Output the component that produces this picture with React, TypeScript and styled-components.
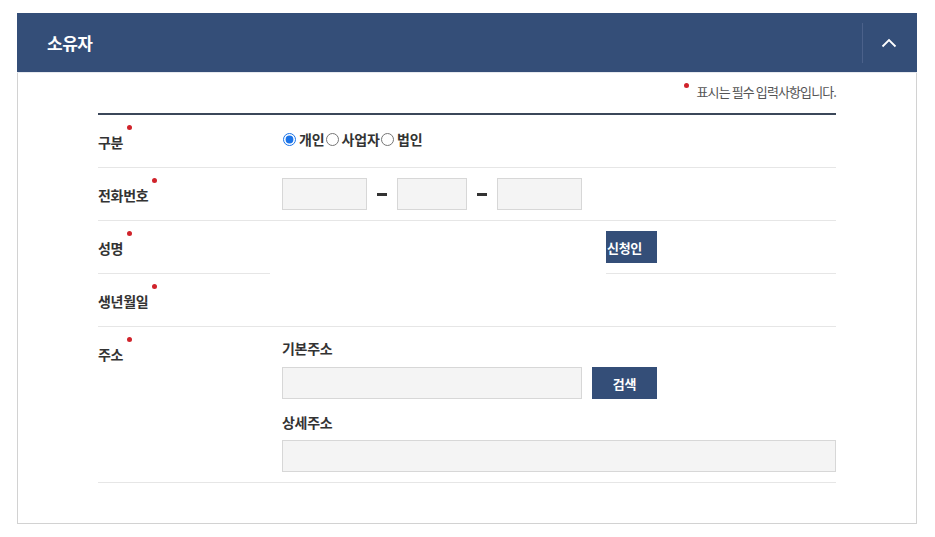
import React from "react"
import styled, { createGlobalStyle } from "styled-components"

const GlobalStyle = createGlobalStyle`
  body {
    margin: 0;
    background: #fff;
    font-family: "Noto Sans CJK KR", "Noto Sans", sans-serif;
    color: #222;
  }
`

const App: React.FC = () => (
  <Page>
    <GlobalStyle />
    <Panel>
      <Header>
        <Title>소유자</Title>
        <ToggleButton type="button" aria-label="접기">
          <svg width="16" height="10" viewBox="0 0 16 10" fill="none">
            <path d="M1.5 8.5L8 2l6.5 6.5" stroke="#fff" strokeWidth="1.8" />
          </svg>
        </ToggleButton>
      </Header>

      <Body>
        <Notice>
          <Dot />
          표시는 필수 입력사항입니다.
        </Notice>

        <Table>
          <Row>
            <Label>
              <Required>구분</Required>
            </Label>
            <Field>
              <RadioGroup>
                <RadioLabel>
                  <Radio type="radio" name="owner" defaultChecked />
                  개인
                </RadioLabel>
                <RadioLabel>
                  <Radio type="radio" name="owner" />
                  사업자
                </RadioLabel>
                <RadioLabel>
                  <Radio type="radio" name="owner" />
                  법인
                </RadioLabel>
              </RadioGroup>
            </Field>
          </Row>

          <Row>
            <Label>
              <Required>전화번호</Required>
            </Label>
            <Field>
              <PhoneGroup>
                <TextInput $width={85} />
                <Dash />
                <TextInput $width={70} />
                <Dash />
                <TextInput $width={85} />
              </PhoneGroup>
            </Field>
          </Row>

          <SplitRow>
            <SplitLabels>
              <SplitLabel $divided>
                <Required>성명</Required>
              </SplitLabel>
              <SplitLabel>
                <Required>생년월일</Required>
              </SplitLabel>
            </SplitLabels>
            <SplitAction>
              <ApplicantButton type="button">신청인</ApplicantButton>
            </SplitAction>
          </SplitRow>

          <Row>
            <Label>
              <Required>주소</Required>
            </Label>
            <AddressField>
              <SubLabel>기본주소</SubLabel>
              <AddressLine>
                <TextInput $width={300} />
                <SearchButton type="button">검색</SearchButton>
              </AddressLine>
              <SubLabel $spaced>상세주소</SubLabel>
              <TextInput />
            </AddressField>
          </Row>
        </Table>
      </Body>
    </Panel>
  </Page>
)

const Page = styled.div`
  padding: 13px 18px 14px 17px;
`

const Panel = styled.section`
  width: 900px;
  box-sizing: border-box;
  border: 1px solid #d2d2d2;
  border-top: 0;
  background: #fff;
`

const Header = styled.div`
  display: flex;
  align-items: center;
  justify-content: space-between;
  height: 59px;
  margin: 0 -1px;
  padding-left: 30px;
  padding-right: 3px;
  background: #344e78;
  border-bottom: 1px solid #e6e9ee;
`

const Title = styled.h2`
  margin: 0;
  font-size: 17px;
  font-weight: 700;
  letter-spacing: -0.5px;
  color: #fff;
`

const ToggleButton = styled.button`
  display: flex;
  align-items: center;
  justify-content: center;
  width: 52px;
  height: 40px;
  padding: 0;
  border: 0;
  border-left: 1px solid #4b618a;
  background: transparent;
  cursor: pointer;
`

const Body = styled.div`
  padding: 10px 80px 40px;
`

const Notice = styled.p`
  display: flex;
  justify-content: flex-end;
  align-items: flex-start;
  margin: 0 0 12px;
  font-size: 13px;
  line-height: 18px;
  letter-spacing: -0.9px;
  color: #555;
`

const Dot = styled.span`
  display: inline-block;
  width: 5px;
  height: 5px;
  margin: 0 8px 0 0;
  border-radius: 50%;
  background: #d0232b;
`

const Table = styled.div`
  border-top: 2px solid #3b4759;
`

const Row = styled.div`
  display: flex;
  min-height: 52px;
  border-bottom: 1px solid #e6e6e6;
`

const Label = styled.div`
  flex: 0 0 184px;
  padding-top: 17px;
  font-size: 14px;
  line-height: 20px;
  font-weight: 700;
  letter-spacing: -0.3px;
  color: #333;
`

const Required = styled.span`
  position: relative;

  &::after {
    content: "";
    position: absolute;
    top: -7px;
    right: -9px;
    width: 5px;
    height: 5px;
    border-radius: 50%;
    background: #d0232b;
  }
`

const Field = styled.div`
  flex: 1;
  display: flex;
  align-items: center;
`

const RadioGroup = styled.div`
  display: flex;
  align-items: center;
  margin-top: -4px;
`

const RadioLabel = styled.label`
  display: inline-flex;
  align-items: center;
  font-size: 14px;
  font-weight: 700;
  letter-spacing: -0.1px;
  color: #333;
  cursor: pointer;
`

const Radio = styled.input`
  width: 13px;
  height: 13px;
  margin: 0 3px 0 1px;
  accent-color: #1a73e8;
`

const PhoneGroup = styled.div`
  display: flex;
  align-items: center;
`

const TextInput = styled.input<{ $width?: number }>`
  box-sizing: border-box;
  width: ${({ $width }) => ($width ? `${$width}px` : "100%")};
  height: 32px;
  padding: 0 8px;
  border: 1px solid #d7d7d7;
  background: #f4f4f4;
  font: inherit;
  outline: none;
`

const Dash = styled.span`
  width: 10px;
  height: 3px;
  margin: 0 10px;
  background: #333;
`

const SplitRow = styled.div`
  display: flex;
  border-bottom: 1px solid #e6e6e6;
`

const SplitLabels = styled.div`
  flex: 0 0 172px;
`

const SplitLabel = styled(Label)<{ $divided?: boolean }>`
  height: 35px;
  border-bottom: ${({ $divided }) => ($divided ? "1px solid #e6e6e6" : "0")};
`

const SplitAction = styled.div`
  display: flex;
  align-items: center;
  height: 52px;
  margin-left: 336px;
  flex: 1;
  border-bottom: 1px solid #e6e6e6;
`

const NavyButton = styled.button`
  height: 32px;
  border: 0;
  background: #344e78;
  color: #fff;
  font-family: inherit;
  font-size: 13px;
  font-weight: 700;
  letter-spacing: -0.3px;
  cursor: pointer;
`

const ApplicantButton = styled(NavyButton)`
  width: 51px;
  padding: 0 0 0 1px;
  text-align: left;
`

const SearchButton = styled(NavyButton)`
  width: 65px;
  margin-left: 10px;
`

const AddressField = styled.div`
  flex: 1;
  padding: 11px 0 10px;
`

const SubLabel = styled.div<{ $spaced?: boolean }>`
  margin: ${({ $spaced }) => ($spaced ? "13px 0 8px" : "0 0 9px")};
  font-size: 14px;
  line-height: 20px;
  font-weight: 700;
  letter-spacing: -0.3px;
  color: #333;
`

const AddressLine = styled.div`
  display: flex;
  align-items: center;
`

export default App
